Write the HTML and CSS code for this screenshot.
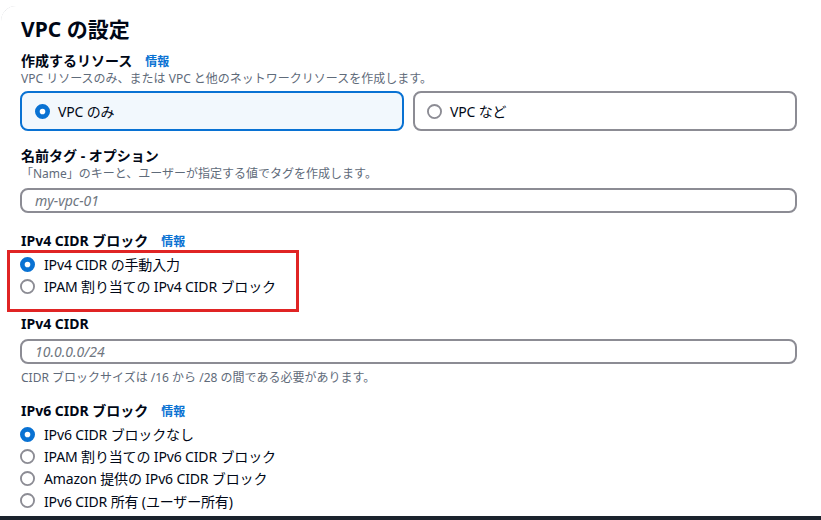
FILE: index.html
```html
<!DOCTYPE html>
<html lang="ja">
<head>
<meta charset="utf-8">
<title>VPC の設定</title>
<link rel="stylesheet" href="styles.css">
</head>
<body>
<div class="page">
  <div class="card">
    <h2 class="title">VPC の設定</h2>

    <div class="field">
      <div class="label"><span>作成するリソース</span><a class="info">情報</a></div>
      <div class="desc">VPC リソースのみ、または VPC と他のネットワークリソースを作成します。</div>
      <div class="tiles">
        <div class="tile tile-on">
          <svg class="radio" viewBox="0 0 16 16"><circle cx="8" cy="8" r="5.5" fill="#fff" stroke="#0972d3" stroke-width="5"/></svg>
          <span>VPC のみ</span>
        </div>
        <div class="tile">
          <svg class="radio" viewBox="0 0 16 16"><circle cx="8" cy="8" r="7" fill="#fff" stroke="#8c8c94" stroke-width="2"/></svg>
          <span>VPC など</span>
        </div>
      </div>
    </div>

    <div class="field f-name">
      <div class="label"><span>名前タグ - オプション</span></div>
      <div class="desc">「Name」のキーと、ユーザーが指定する値でタグを作成します。</div>
      <div class="input"><span class="ph">my-vpc-01</span></div>
    </div>

    <div class="field f-v4">
      <div class="label"><span>IPv4 CIDR ブロック</span><a class="info">情報</a></div>
      <div class="radios r-v4">
        <div class="row">
          <svg class="radio" viewBox="0 0 16 16"><circle cx="8" cy="8" r="5.5" fill="#fff" stroke="#0972d3" stroke-width="5"/></svg>
          <span>IPv4 CIDR の手動入力</span>
        </div>
        <div class="row">
          <svg class="radio" viewBox="0 0 16 16"><circle cx="8" cy="8" r="7" fill="#fff" stroke="#8c8c94" stroke-width="2"/></svg>
          <span>IPAM 割り当ての IPv4 CIDR ブロック</span>
        </div>
        <div class="highlight"></div>
      </div>
    </div>

    <div class="field f-cidr">
      <div class="label"><span>IPv4 CIDR</span></div>
      <div class="input"><span class="ph">10.0.0.0/24</span></div>
      <div class="hint">CIDR ブロックサイズは /16 から /28 の間である必要があります。</div>
    </div>

    <div class="field f-v6">
      <div class="label"><span>IPv6 CIDR ブロック</span><a class="info">情報</a></div>
      <div class="radios r-v6">
        <div class="row">
          <svg class="radio" viewBox="0 0 16 16"><circle cx="8" cy="8" r="5.5" fill="#fff" stroke="#0972d3" stroke-width="5"/></svg>
          <span>IPv6 CIDR ブロックなし</span>
        </div>
        <div class="row">
          <svg class="radio" viewBox="0 0 16 16"><circle cx="8" cy="8" r="7" fill="#fff" stroke="#8c8c94" stroke-width="2"/></svg>
          <span>IPAM 割り当ての IPv6 CIDR ブロック</span>
        </div>
        <div class="row">
          <svg class="radio" viewBox="0 0 16 16"><circle cx="8" cy="8" r="7" fill="#fff" stroke="#8c8c94" stroke-width="2"/></svg>
          <span>Amazon 提供の IPv6 CIDR ブロック</span>
        </div>
        <div class="row">
          <svg class="radio" viewBox="0 0 16 16"><circle cx="8" cy="8" r="7" fill="#fff" stroke="#8c8c94" stroke-width="2"/></svg>
          <span>IPv6 CIDR 所有 (ユーザー所有)</span>
        </div>
      </div>
    </div>
  </div>
  <div class="bottombar"></div>
</div>
</body>
</html>
```

FILE: styles.css
```css
* { box-sizing: border-box; }

html, body {
  margin: 0;
  padding: 0;
  background: #ffffff;
}

body {
  font-family: "Noto Sans", "Noto Sans CJK JP", sans-serif;
  color: #000716;
  font-size: 14px;
}

.page {
  width: 821px;
  height: 520px;
  display: flex;
  flex-direction: column;
  overflow: hidden;
}

.card {
  position: relative;
  flex: 1;
  margin-top: 5px;
  border: 1px solid transparent;
  border-right: none;
  border-bottom: none;
  border-top-left-radius: 16px;
  padding: 9px 24px 0 19px;
  overflow: hidden;
}

/* faint rounded corner of the container */
.card::before {
  content: "";
  position: absolute;
  left: -1px;
  top: -1px;
  width: 40px;
  height: 40px;
  border-top: 1px solid #c6c9ce;
  border-left: 1px solid #c6c9ce;
  border-top-left-radius: 16px;
  -webkit-mask-image: linear-gradient(135deg, #000 0%, #000 20%, transparent 45%);
  mask-image: linear-gradient(135deg, #000 0%, #000 20%, transparent 45%);
  pointer-events: none;
}

.title {
  margin: 0;
  font-size: 21px;
  line-height: 28px;
  font-weight: 700;
  padding-left: 1px;
}

.field { margin-top: 9px; }

.label {
  display: flex;
  align-items: baseline;
  height: 18px;
  font-size: 14px;
  line-height: 18px;
  font-weight: 700;
  padding-left: 1px;
}

.info {
  color: #0972d3;
  font-size: 12px;
  font-weight: 700;
  margin-left: 13px;
}

.desc, .hint {
  font-size: 12px;
  line-height: 16px;
  height: 16px;
  color: #5f6b7a;
  margin-top: 1px;
  padding-left: 1px;
}

.tiles {
  margin-top: 4px;
  display: grid;
  grid-template-columns: 1fr 1fr;
  gap: 9px;
}

.tile {
  height: 40px;
  border: 2px solid #8c8c94;
  border-radius: 8px;
  display: flex;
  align-items: center;
  gap: 8px;
  padding-left: 12px;
  font-size: 14px;
  letter-spacing: -0.15px;
}

.tile-on {
  border-color: #0972d3;
  background: #f2f8fd;
  padding-left: 13px;
}

.radio {
  width: 15px;
  height: 15px;
  flex: none;
}

.f-name { margin-top: 16px; }

.input {
  margin-top: 6px;
  height: 25px;
  border: 2px solid #8c8c94;
  border-radius: 8px;
  display: flex;
  align-items: center;
  padding-left: 13px;
}

.ph {
  font-style: italic;
  color: #6f7680;
  font-size: 14px;
}

.f-v4 { margin-top: 19px; }

.radios {
  position: relative;
  margin-top: 3px;
}

.row {
  height: 22px;
  display: flex;
  align-items: center;
  gap: 9px;
  font-size: 14px;
  letter-spacing: -0.15px;
}

.r-v6 .row { height: 22.2px; }

.highlight {
  position: absolute;
  left: -13px;
  top: -3px;
  width: 292px;
  height: 62px;
  border: 3px solid #e02424;
  pointer-events: none;
}

.f-cidr { margin-top: 18px; }

.hint { margin-top: 6px; }

.f-v6 { margin-top: 16px; }

.bottombar {
  height: 4px;
  flex: none;
  background: #1b232d;
}
```
